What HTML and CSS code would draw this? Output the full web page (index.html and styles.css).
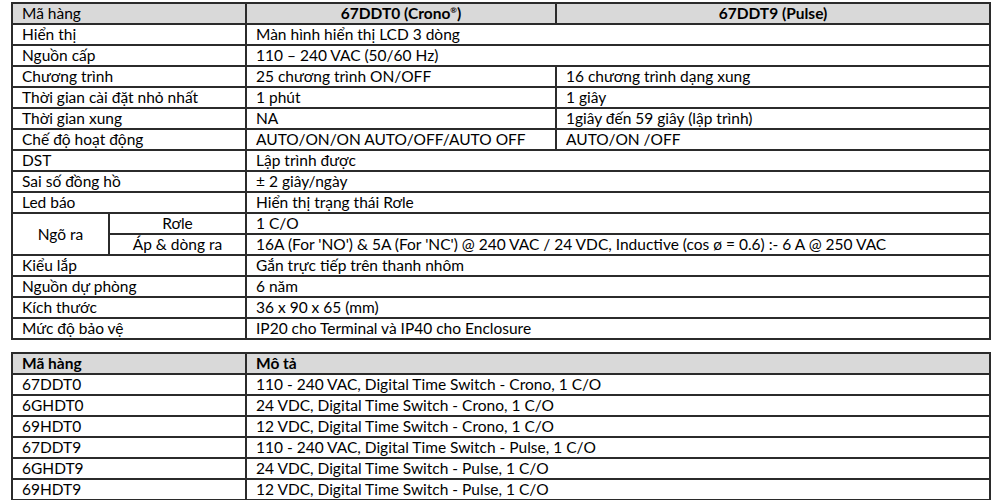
FILE: index.html
```html
<!DOCTYPE html>
<html lang="vi">
<head>
<meta charset="utf-8">
<title>Bảng thông số</title>
<link rel="stylesheet" href="styles.css">
</head>
<body>
<div class="page">
  <table class="spec">
    <colgroup><col class="c1a"><col class="c1b"><col class="c2"><col class="c3"></colgroup>
    <tr class="head"><td colspan="2">Mã hàng</td><td class="center bold">67DDT0 (Crono<sup>®</sup>)</td><td class="center bold">67DDT9 (Pulse)</td></tr>
    <tr><td colspan="2">Hiển thị</td><td colspan="2">Màn hình hiển thị LCD 3 dòng</td></tr>
    <tr><td colspan="2">Nguồn cấp</td><td colspan="2">110 – 240 VAC (50/60 Hz)</td></tr>
    <tr><td colspan="2">Chương trình</td><td>25 chương trình ON/OFF</td><td>16 chương trình dạng xung</td></tr>
    <tr><td colspan="2">Thời gian cài đặt nhỏ nhất</td><td>1 phút</td><td>1 giây</td></tr>
    <tr><td colspan="2">Thời gian xung</td><td>NA</td><td>1giây đến 59 giây (lập trình)</td></tr>
    <tr><td colspan="2">Chế độ hoạt động</td><td>AUTO/ON/ON AUTO/OFF/AUTO OFF</td><td>AUTO/ON /OFF</td></tr>
    <tr><td colspan="2">DST</td><td colspan="2">Lập trình được</td></tr>
    <tr><td colspan="2">Sai số đồng hồ</td><td colspan="2">± 2 giây/ngày</td></tr>
    <tr><td colspan="2">Led báo</td><td colspan="2">Hiển thị trạng thái Rơle</td></tr>
    <tr><td rowspan="2" class="center">Ngõ ra</td><td class="center">Rơle</td><td colspan="2">1 C/O</td></tr>
    <tr><td class="center">Áp &amp; dòng ra</td><td colspan="2">16A (For 'NO') &amp; 5A (For 'NC') @ 240 VAC / 24 VDC, Inductive (cos ø = 0.6) :- 6 A @ 250 VAC</td></tr>
    <tr><td colspan="2">Kiểu lắp</td><td colspan="2">Gắn trực tiếp trên thanh nhôm</td></tr>
    <tr><td colspan="2">Nguồn dự phòng</td><td colspan="2">6 năm</td></tr>
    <tr><td colspan="2">Kích thước</td><td colspan="2">36 x 90 x 65 (mm)</td></tr>
    <tr><td colspan="2">Mức độ bảo vệ</td><td colspan="2">IP20 cho Terminal và IP40 cho Enclosure</td></tr>
  </table>

  <table class="spec codes">
    <colgroup><col class="k1"><col class="k2"></colgroup>
    <tr class="head"><td class="bold">Mã hàng</td><td class="bold">Mô tả</td></tr>
    <tr><td>67DDT0</td><td>110 - 240 VAC, Digital Time Switch - Crono, 1 C/O</td></tr>
    <tr><td>6GHDT0</td><td>24 VDC, Digital Time Switch - Crono, 1 C/O</td></tr>
    <tr><td>69HDT0</td><td>12 VDC, Digital Time Switch - Crono, 1 C/O</td></tr>
    <tr><td>67DDT9</td><td>110 - 240 VAC, Digital Time Switch - Pulse, 1 C/O</td></tr>
    <tr><td>6GHDT9</td><td>24 VDC, Digital Time Switch - Pulse, 1 C/O</td></tr>
    <tr><td>69HDT9</td><td>12 VDC, Digital Time Switch - Pulse, 1 C/O</td></tr>
  </table>
</div>
</body>
</html>
```
FILE: styles.css
```css
html, body {
  margin: 0;
  padding: 0;
  background: #ffffff;
}
.page {
  padding: 2px 11px 0 11px;
  font-family: "Lato", "Liberation Sans", sans-serif;
  font-size: 15.5px;
  color: #000000;
}
.spec {
  width: 978px;
  border-collapse: collapse;
  table-layout: fixed;
  border: 2px solid #111111;
}
.spec td {
  border: 2px solid #2b2b2b;
  height: 19px;
  padding: 0 9px;
  line-height: 19px;
  white-space: nowrap;
  vertical-align: middle;
}
.head td {
  background: #d9d9d9;
}
.center { text-align: center; }
.bold { font-weight: 700; }
sup {
  font-size: 8px;
  line-height: 0;
  vertical-align: 6px;
}
.c1a { width: 97px; }
.c1b { width: 137px; }
.c2 { width: 310px; }
.c3 { width: 434px; }
.codes {
  margin-top: 12px;
}
.k1 { width: 234px; }
.k2 { width: 744px; }
```
